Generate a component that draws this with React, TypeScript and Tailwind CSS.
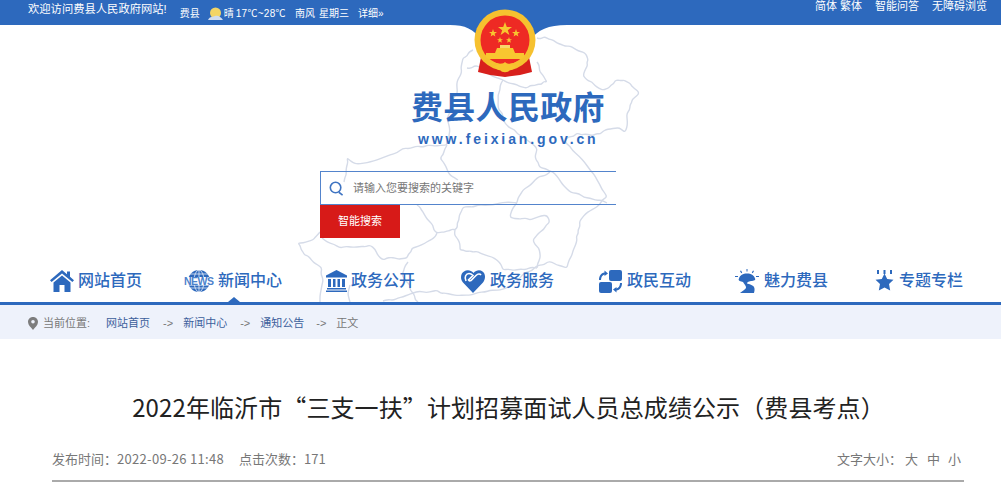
import React from 'react';

// subdivide with a small fixed wobble so the borders look hand traced, not spline-smooth
const wobble = (pts: number[][]) => {
    const out: number[][] = [];
    for (let i = 0; i < pts.length - 1; i++) {
        const [x1, y1] = pts[i];
        const [x2, y2] = pts[i + 1];
        out.push([x1, y1]);
        const len = Math.hypot(x2 - x1, y2 - y1);
        if (len < 8) continue;
        const nx = -(y2 - y1) / len;
        const ny = (x2 - x1) / len;
        const a = Math.sin(x1 * 1.7 + y1 * 2.3) * 1.3;
        const b = Math.cos(x2 * 2.1 + y1 * 1.1) * 1.3;
        out.push([x1 + (x2 - x1) / 3 + nx * a, y1 + (y2 - y1) / 3 + ny * a]);
        out.push([x1 + ((x2 - x1) * 2) / 3 + nx * b, y1 + ((y2 - y1) * 2) / 3 + ny * b]);
    }
    out.push(pts[pts.length - 1]);
    return out;
};

const smooth = (raw: number[][]) => {
    const pts = wobble(raw);
    let d = `M${pts[0][0]} ${pts[0][1]}`;
    for (let i = 1; i < pts.length - 1; i++) {
        const mx = (pts[i][0] + pts[i + 1][0]) / 2;
        const my = (pts[i][1] + pts[i + 1][1]) / 2;
        d += ` Q${pts[i][0]} ${pts[i][1]} ${mx} ${my}`;
    }
    const last = pts[pts.length - 1];
    return d + ` L${last[0]} ${last[1]}`;
};

// county map outline, page coordinates
const MAP_LINES: number[][][] = [
    [[537, 38], [545, 37], [557, 43], [570, 46], [583, 52], [588, 60], [586, 68], [583, 75], [592, 82], [603, 90], [611, 85], [618, 80], [627, 82], [634, 88], [640, 93], [634, 98], [630, 105], [627, 118], [625, 132], [616, 128], [610, 129], [600, 134], [590, 135], [577, 133], [565, 140], [572, 150], [590, 170], [600, 185], [607, 197], [595, 208], [582, 218], [578, 230], [577, 240], [572, 255], [567, 268], [552, 262], [540, 265], [527, 272], [515, 283], [500, 290], [485, 292], [465, 295], [445, 293], [433, 291], [413, 293], [398, 298], [383, 301]],
    [[473, 50], [463, 58], [461, 68], [460, 76], [457, 88], [455, 96], [450, 110], [448, 122], [449, 135], [447, 145], [435, 146], [423, 147], [403, 148], [397, 153], [377, 160], [357, 164], [347, 158], [346, 170], [344, 182]],
    [[320, 232], [313, 240], [298, 243], [303, 252], [310, 258], [322, 268], [322, 285], [320, 302]],
    [[467, 68], [478, 66], [490, 75], [503, 80], [515, 84], [527, 88], [538, 84], [547, 82], [540, 72], [537, 62]],
    [[503, 80], [500, 90], [498, 105], [503, 118], [510, 128], [522, 136], [537, 148], [536, 160], [541, 168], [553, 172], [563, 185], [573, 193], [590, 198], [607, 203]],
    [[447, 145], [440, 158], [448, 172], [458, 180]],
    [[550, 172], [535, 180], [523, 190], [517, 203], [510, 217], [520, 219], [530, 220], [547, 215], [550, 222], [540, 232], [533, 240], [540, 253], [537, 268]],
    [[417, 205], [423, 212], [430, 222], [437, 233], [447, 231], [455, 230], [459, 220], [463, 207], [478, 205], [500, 203], [517, 203]],
    [[455, 230], [457, 238], [460, 250], [470, 251], [480, 253], [497, 260], [503, 270], [520, 269], [537, 268]],
    [[322, 238], [340, 248], [357, 247], [370, 245], [383, 260], [395, 258], [407, 258], [412, 248], [430, 240], [437, 233]],
    [[408, 262], [402, 275], [410, 285], [413, 293], [418, 302]],
    [[350, 285], [348, 295], [350, 302]],
];

const HomeIcon = () => (
    <svg viewBox="0 0 24 22" className="h-[22px] w-[24px] fill-[#2d69bd]">
        <path d="M12 0 L17 4.2 V1.5 H20 V6.8 L24 10.2 L22.4 12 L12 3.4 L1.6 12 L0 10.2 Z" />
        <path d="M12 5.5 L20.5 12.6 V22 H14.5 V15 H9.5 V22 H3.5 V12.6 Z" />
    </svg>
);

const NewsIcon = () => (
    <svg viewBox="0 0 30 22" className="h-[22px] w-[30px]">
        <circle cx="15" cy="11" r="11" fill="#2d69bd" />
        <g stroke="#fff" strokeWidth="0.7" fill="none">
            <ellipse cx="15" cy="11" rx="5" ry="11" />
            <path d="M15 0 V22 M5 4 H25 M5 18 H25" />
        </g>
        <rect x="0" y="7" width="30" height="8.5" fill="#fff" />
        <text x="0" y="15" fontFamily="Liberation Sans" fontSize="10.5" fontWeight="700" fill="#4d82cc" textLength="30">NEWS</text>
    </svg>
);

const BankIcon = () => (
    <svg viewBox="0 0 21 22" className="h-[22px] w-[21px] fill-[#2d69bd]">
        <path d="M10.5 0 L21 5.5 V7.5 H0 V5.5 Z" />
        <path d="M2 9 H5 V17 H2 Z M7 9 H9.5 V17 H7 Z M11.5 9 H14 V17 H11.5 Z M16 9 H19 V17 H16 Z" />
        <path d="M1 18 H20 V19.5 H1 Z M0 20.5 H21 V22 H0 Z" />
    </svg>
);

const HeartIcon = () => (
    <svg viewBox="0 0 24 23" className="h-[23px] w-[24px]">
        <path d="M12 23 L2 12.5 C-1 9 -0.5 3.5 3 1.5 C6 -0.5 10 0 12.5 3 C15 0 19 -0.5 21.5 1.5 C25 4 24.5 9 22 12.5 Z" fill="#2d69bd" />
        <path d="M5 11 C3 7 5 3.5 8 3.5 C10 3.5 11 4.5 12 5.5 L7.5 10 C8 11 9 11 10 10.5 L15 5.5 C17 3.5 19 3.5 20 5" fill="none" stroke="#fff" strokeWidth="1.6" />
    </svg>
);

const InteractIcon = () => (
    <svg viewBox="0 0 23 23" className="h-[23px] w-[23px] fill-[#2d69bd]">
        <rect x="10" y="0" width="13" height="11" rx="2" />
        <rect x="0" y="12" width="13" height="11" rx="2" />
        <path d="M0 10 C0 6 2 3 5.5 2.5 V0.5 L9 3.5 L5.5 6 V4.5 C3.5 5 2 7 2 10 Z" />
        <path d="M23 13 C23 17 21 20 17.5 20.5 V22.5 L14 19.5 L17.5 17 V18.5 C19.5 18 21 16 21 13 Z" />
    </svg>
);

const ScenicIcon = () => (
    <svg viewBox="0 0 24 24" className="h-[24px] w-[24px] fill-[#2d69bd]">
        <path d="M11.5 0 H12.5 V2.5 H11.5 Z M5 2 L6 1.5 L7.2 3.6 L6.2 4.2 Z M18 1.5 L19 2 L17.8 4.2 L16.8 3.6 Z M0 7 H3 V8 H0 Z M21 7 H24 V8 H21 Z" />
        <path d="M4 9.5 C5 6 8 4.5 12 4.5 C16 4.5 19 6 20 9.5 C21 11 19 12 16 12 C13 12.5 12 13.5 12 14.5 C14 15 18 16 19 18 C20 20 19.5 22 19 24 H5 C7 22 10 21 11 19 C11.5 17 9 15 8 13 C6 12.5 2.5 12 4 9.5 Z" />
    </svg>
);

const TopicIcon = () => (
    <svg viewBox="0 0 19 23" className="h-[23px] w-[19px] fill-[#2d69bd]">
        <path d="M2 0 H4 V4 H2 Z M8.5 0 H10.5 V4 H8.5 Z M15 0 H17 V4 H15 Z" />
        <path d="M9.5 3.5 L12.2 9 L18.5 9.8 L14 14.1 L15.2 20.5 L9.5 17.4 L3.8 20.5 L5 14.1 L0.5 9.8 L6.8 9 Z" />
    </svg>
);

const NAV = [
    { label: '网站首页', icon: <HomeIcon />, iconBox: 'w-[28px]', gap: '' },
    { label: '新闻中心', icon: <NewsIcon />, iconBox: 'w-[34px]', gap: 'ml-[42px]' },
    { label: '政务公开', icon: <BankIcon />, iconBox: 'w-[25px]', gap: 'ml-[44px]' },
    { label: '政务服务', icon: <HeartIcon />, iconBox: 'w-[29px]', gap: 'ml-[46px]' },
    { label: '政民互动', icon: <InteractIcon />, iconBox: 'w-[28px]', gap: 'ml-[45px]' },
    { label: '魅力费县', icon: <ScenicIcon />, iconBox: 'w-[29px]', gap: 'ml-[44px]' },
    { label: '专题专栏', icon: <TopicIcon />, iconBox: 'w-[24px]', gap: 'ml-[47px]' },
];

const Emblem = () => (
    <svg viewBox="0 0 70 70" className="h-[70px] w-[70px]">
        {/* ribbon */}
        <path d="M11 50 L8 65 L20 68 L35 70 L50 68 L62 65 L59 50 Z" fill="#d8201c" />
        <circle cx="35" cy="33" r="30.5" fill="#f6c12f" />
        <circle cx="35" cy="33" r="24.5" fill="#ee2a24" />
        <path d="M35 15 L36.8 20 L42 20 L37.8 23.2 L39.4 28 L35 25 L30.6 28 L32.2 23.2 L28 20 L33.2 20 Z" fill="#f8c630" />
        <path d="M23 22 L24 25 L27 25 L24.6 26.8 L25.4 29.6 L23 28 L20.6 29.6 L21.4 26.8 L19 25 L22 25 Z" fill="#f8c630" />
        <path d="M46 22 L47 25 L50 25 L47.6 26.8 L48.4 29.6 L46 28 L43.6 29.6 L44.4 26.8 L42 25 L45 25 Z" fill="#f8c630" />
        <path d="M30 30 L30.8 32.2 L33 32.2 L31.2 33.6 L31.9 35.8 L30 34.5 L28.1 35.8 L28.8 33.6 L27 32.2 L29.2 32.2 Z" fill="#f8c630" />
        <path d="M39 30 L39.8 32.2 L42 32.2 L40.2 33.6 L40.9 35.8 L39 34.5 L37.1 35.8 L37.8 33.6 L36 32.2 L38.2 32.2 Z" fill="#f8c630" />
        <path d="M27 41 H43 L45 46 H25 Z" fill="#f8c630" />
        <path d="M30 38 H40 V41 H30 Z" fill="#f8d66a" />
        <path d="M16 46 H54 V52 H16 Z" fill="#f8c630" />
        <path d="M11 49 C18 58 26 61 35 61 C44 61 52 58 59 49 L57 47 C51 54 44 57 35 57 C26 57 19 54 13 47 Z" fill="#f6c12f" />
        <path d="M24 60 C28 56 32 58 35 55 C38 58 42 56 46 60 C43 61 42 64 40 63 C38 66 32 66 30 63 C28 64 27 61 24 60 Z" fill="#f8c630" />
    </svg>
);

export default function App() {
    return (
        <div className="min-h-[495px] overflow-hidden bg-white font-['Liberation_Sans','Noto_Sans_CJK_SC',sans-serif]">
            {/* Top bar */}
            <div className="flex h-[25px] bg-[#2d69bd] pl-[28px] pr-[14px] text-[11px] text-white">
                <span className="mt-[1px] text-[11.3px] leading-[16px]">欢迎访问费县人民政府网站!</span>
                <div className="ml-[13px] mt-[7px] flex h-[14px] items-center text-[10px] leading-[14px]">
                    <span>费县</span>
                    <svg viewBox="0 0 15 14" className="ml-[8px] h-[14px] w-[15px]">
                        <circle cx="7.5" cy="6" r="5.5" fill="#f3d565" />
                        <path d="M0 13 C2 9 5 10 7 9 C10 8 13 10 15 13 Z" fill="#cfdcef" />
                    </svg>
                    <span className="ml-[1px]">晴</span>
                    <span className="ml-[2px] tracking-[0.3px]">17℃~28℃</span>
                    <span className="ml-[9px]">南风</span>
                    <span className="ml-[4px]">星期三</span>
                    <span className="ml-[9px]">详细»</span>
                </div>
                <div className="ml-auto flex h-[13px] items-center text-[11px]">
                    <span>简体 繁体</span>
                    <span className="ml-[13px]">智能问答</span>
                    <span className="ml-[13px]">无障碍浏览</span>
                </div>
            </div>

            {/* Header with map behind */}
            <div className="relative h-[277px]">
                <svg viewBox="0 25 1001 277" className="absolute left-0 top-0 h-[277px] w-[1001px]" fill="none">
                    {/* blue bump behind the emblem */}
                    <path d="M450 25 C465 25 474 29 481 40 H530 C538 30 548 25 567 25 Z" fill="#2d69bd" />
                    {MAP_LINES.map((pts, i) => (
                        <path key={i} d={smooth(pts)} stroke="#d5dbe8" strokeWidth="1.4" strokeLinejoin="round" />
                    ))}
                </svg>
                <div className="absolute left-[470px] top-[-18px]">
                    <Emblem />
                </div>

                <div className="relative flex flex-col">
                    <h1 className="ml-[411px] mt-[63px] h-[40px] w-fit text-[32px] font-bold leading-[40px] tracking-[0.3px] text-[#2d69bd]">费县人民政府</h1>
                    <div className="ml-[418px] mt-[2px] h-[18px] text-[14px] font-bold leading-[18px] tracking-[2.9px] text-[#2d69bd]">www.feixian.gov.cn</div>

                    {/* Search */}
                    <div className="ml-[320px] mt-[23px] flex h-[34px] w-[296px] items-center border-y border-l border-[#5384cc]">
                        <svg viewBox="0 0 16 16" className="ml-[8px] h-[15px] w-[15px]" fill="none" stroke="#3f74c2" strokeWidth="1.7">
                            <circle cx="7" cy="7" r="5.6" />
                            <path d="M10.5 12 L14.5 15" />
                        </svg>
                        <span className="ml-[9px] text-[11px] text-[#777]">请输入您要搜索的关键字</span>
                    </div>
                    <button className="ml-[320px] flex h-[33px] w-[80px] items-center justify-center bg-[#d71a18] text-[11px] text-white">智能搜索</button>

                    {/* Nav */}
                    <div className="relative ml-[50px] mt-[30px] flex h-[26px] items-center">
                        {NAV.map((item) => (
                            <div key={item.label} className={`flex items-center ${item.gap}`}>
                                <div className={`flex items-center ${item.iconBox}`}>{item.icon}</div>
                                <span className="text-[16px] font-medium leading-[24px] text-[#2d69bd]">{item.label}</span>
                            </div>
                        ))}
                    </div>
                </div>
                <div className="absolute bottom-0 left-[228px] h-0 w-0 border-x-[6px] border-b-[5px] border-x-transparent border-b-[#2d69bd]" />
            </div>
            <div className="h-[3px] bg-[#2d69bd]" />

            {/* Breadcrumb */}
            <div className="flex h-[34px] items-center bg-[#eef2fb] pl-[28px] pt-[3px] text-[11px] text-[#777]">
                <svg viewBox="0 0 10 13" className="h-[13px] w-[10px]">
                    <path d="M5 0 C8 0 10 2.2 10 5 C10 8 7 10.5 5 13 C3 10.5 0 8 0 5 C0 2.2 2 0 5 0 Z" fill="#7d7d7d" />
                    <circle cx="5" cy="4.8" r="1.8" fill="#eef2fb" />
                </svg>
                <span className="ml-[5px]">当前位置:</span>
                <span className="ml-[16px] text-[#3c5f9c]">网站首页</span>
                <span className="ml-[13px]">-&gt;</span>
                <span className="ml-[10px] text-[#3c5f9c]">新闻中心</span>
                <span className="ml-[13px]">-&gt;</span>
                <span className="ml-[10px] text-[#3c5f9c]">通知公告</span>
                <span className="ml-[12px]">-&gt;</span>
                <span className="ml-[10px]">正文</span>
            </div>

            {/* Article head */}
            <h2 className="mt-[50px] h-[36px] pl-[16px] text-center font-['Noto_Sans_CJK_SC',sans-serif] text-[24px] font-normal leading-[36px] tracking-[0.1px] text-[#222]">
                2022年临沂市“三支一扶”计划招募面试人员总成绩公示（费县考点）
            </h2>
            <div className="ml-[52px] mt-[25px] flex w-[912px] items-center border-b-2 border-[#aaa] pb-[12px] font-['Noto_Sans_CJK_SC',sans-serif] text-[13px] leading-[18px] text-[#777]">
                <span>发布时间：<span className="tracking-[0.3px]">2022-09-26 11:48</span></span>
                <span className="ml-[15px]">点击次数：<span>171</span></span>
                <div className="ml-auto mr-[3px] flex">
                    <span>文字大小：</span>
                    <span className="ml-[3px]">大</span>
                    <span className="ml-[9px]">中</span>
                    <span className="ml-[8px]">小</span>
                </div>
            </div>
        </div>
    );
}
